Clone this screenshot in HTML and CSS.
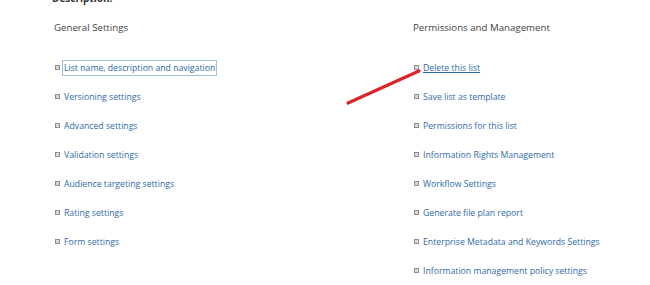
FILE: index.html
```html
<!DOCTYPE html>
<html>
<head>
<meta charset="utf-8">
<link rel="stylesheet" href="styles.css">
</head>
<body>
<div class="page">
  <div class="desc">Description:</div>
  <div class="cols">
    <div class="col">
      <h3 class="head">General Settings</h3>
      <ul class="links">
        <li><a class="focus">List name, description and navigation</a></li>
        <li><a>Versioning settings</a></li>
        <li><a>Advanced settings</a></li>
        <li><a>Validation settings</a></li>
        <li><a>Audience targeting settings</a></li>
        <li><a>Rating settings</a></li>
        <li><a>Form settings</a></li>
      </ul>
    </div>
    <div class="col">
      <h3 class="head">Permissions and Management</h3>
      <ul class="links">
        <li><a class="under">Delete this list</a></li>
        <li><a>Save list as template</a></li>
        <li><a>Permissions for this list</a></li>
        <li><a>Information Rights Management</a></li>
        <li><a>Workflow Settings</a></li>
        <li><a>Generate file plan report</a></li>
        <li><a>Enterprise Metadata and Keywords Settings</a></li>
        <li><a>Information management policy settings</a></li>
      </ul>
    </div>
  </div>
  <svg class="arrow" width="80" height="40" viewBox="0 0 80 40"><line x1="3" y1="35" x2="74" y2="3" stroke="#d9262b" stroke-width="3.2" stroke-linecap="round"/></svg>
</div>
</body>
</html>
```
FILE: styles.css
```css
html, body { margin: 0; padding: 0; background: #fff; }
.page {
  position: relative;
  width: 650px;
  height: 285px;
  overflow: hidden;
  font-family: "Open Sans", "Noto Sans", sans-serif;
}
.desc {
  position: absolute;
  left: 52px;
  top: -9px;
  font-weight: bold;
  font-size: 10px;
  color: #333;
}
.cols {
  display: grid;
  grid-template-columns: 359px 1fr;
  padding-left: 54px;
  padding-top: 20px;
}
.head {
  margin: 0;
  font-weight: normal;
  font-size: 9.7px;
  line-height: 16px;
  color: #444;
}
.links {
  list-style: none;
  margin: 17px 0 0 0;
  padding: 0;
}
.links li {
  display: flex;
  align-items: center;
  height: 29px;
  font-size: 8.7px;
  color: #2b6db0;
}
.links li::before {
  content: "";
  width: 3px;
  height: 3px;
  border: 1px solid #8f8f8f;
  background: #d8d8d8;
  margin: 0 4px 0 1px;
  flex: none;
}
.links a { color: #2f6aa8; white-space: nowrap; }
.links a.focus { outline: 1px solid #9cc3e6; outline-offset: 1px; }
.links a.under { text-decoration: underline; }
.arrow {
  position: absolute;
  left: 345px;
  top: 68px;
}
```
